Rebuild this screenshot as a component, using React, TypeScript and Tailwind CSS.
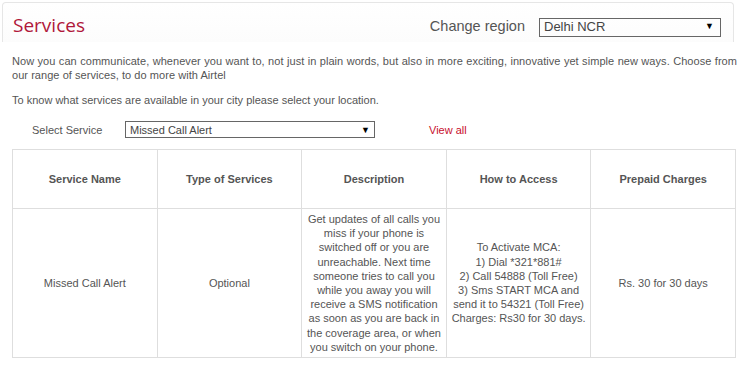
export default function App() {
  const cols = ['Service Name', 'Type of Services', 'Description', 'How to Access', 'Prepaid Charges'];

  return (
    <div className="w-[749px] h-[367px] bg-white overflow-hidden font-['Liberation_Sans',Arial,sans-serif] text-[#555]">
      {/* header panel */}
      <div className="mx-[2px] mt-[2px] w-[732px] h-[40px] border border-b-0 border-[#e6e6e6] rounded-t-[4px] bg-gradient-to-b from-white to-[#fcfcfc] flex items-center justify-between pl-[10px] pr-[12px]">
        <h1 className="font-['Open_Sans',sans-serif] text-[19px] leading-none text-[#b0173a] mt-[5px]">Services</h1>
        <div className="flex items-center gap-[14px] mt-[9px]">
          <span className="text-[14.5px]">Change region</span>
          <div className="w-[182px] h-[19px] border border-[#666] flex items-center justify-between pl-[4px] pr-[6px] text-[13px] text-[#444]">
            <span>Delhi NCR</span>
            <span className="text-[9px] text-black">▼</span>
          </div>
        </div>
      </div>

      <div className="px-[12px] text-[11px] leading-[14px]">
        <p className="mt-[12px] text-justify tracking-[0.05px]">
          Now you can communicate, whenever you want to, not just in plain words, but also in more exciting, innovative yet simple new ways. Choose from our range of services, to do more with Airtel
        </p>
        <p className="mt-[11px]">To know what services are available in your city please select your location.</p>

        <div className="flex items-center mt-[14px] h-[17px]">
          <span className="ml-[20px] w-[93px]">Select Service</span>
          <div className="w-[250px] h-[17px] border border-[#666] flex items-center justify-between pl-[4px] pr-[4px] text-[#444]">
            <span>Missed Call Alert</span>
            <span className="text-[9px] text-black">▼</span>
          </div>
          <span className="ml-[54px] text-[#c8102e]">View all</span>
        </div>

        <table className="mt-[11px] w-[724px] border-collapse table-fixed">
          <thead>
            <tr className="h-[59px]">
              {cols.map((c) => (
                <th key={c} className="border border-[#dedede] font-bold text-[#555] text-center align-middle">
                  {c}
                </th>
              ))}
            </tr>
          </thead>
          <tbody>
            <tr>
              <td className="border border-[#dedede] text-center align-middle">Missed Call Alert</td>
              <td className="border border-[#dedede] text-center align-middle">Optional</td>
              <td className="border border-[#dedede] text-center align-middle px-[2px] py-[3px] leading-[14.2px]">
                Get updates of all calls you miss if your phone is switched off or you are unreachable. Next time someone tries to call you while you away you will receive a SMS notification as soon as you are back in the coverage area, or when you switch on your phone.
              </td>
              <td className="border border-[#dedede] text-center align-middle leading-[14.2px]">
                To Activate MCA:<br />
                1) Dial *321*881#<br />
                2) Call 54888 (Toll Free)<br />
                3) Sms START MCA and<br />
                send it to 54321 (Toll Free)<br />
                Charges: Rs30 for 30 days.
              </td>
              <td className="border border-[#dedede] text-center align-middle">Rs. 30 for 30 days</td>
            </tr>
          </tbody>
        </table>
      </div>
    </div>
  );
}
